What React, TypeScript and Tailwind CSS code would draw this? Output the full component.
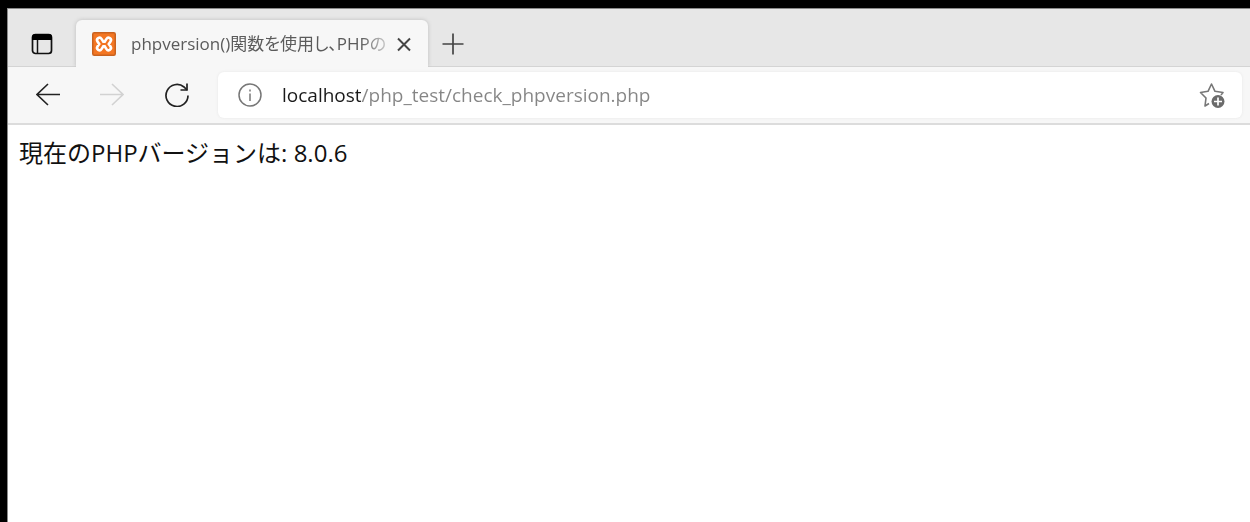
import { useState } from "react";

const XamppIcon: React.FC = () => (
  <svg className="size-6 shrink-0" viewBox="0 0 24 24" aria-hidden="true">
    <rect x="0.75" y="0.75" width="22.5" height="22.5" rx="1.5" fill="#f37623" stroke="#c9621f" strokeWidth="1.5" />
    <g fill="none" strokeLinecap="round" strokeLinejoin="round">
      <path d="M7.5 8.2l2.5 3.8-2.5 3.8M16.5 8.2L14 12l2.5 3.8M10 12h4" stroke="#fff" strokeWidth="7.4" />
      <path d="M7.5 8.2l2.5 3.8-2.5 3.8M16.5 8.2L14 12l2.5 3.8M10 12h4" stroke="#f37623" strokeWidth="2.2" />
    </g>
  </svg>
);

const TabActionsIcon: React.FC = () => (
  <svg className="size-6" viewBox="0 0 24 24" aria-hidden="true">
    <rect x="2.5" y="2.5" width="19" height="19" rx="3" fill="none" stroke="#111" strokeWidth="1.7" />
    <path d="M2 8V5a3 3 0 0 1 3-3h14a3 3 0 0 1 3 3v3z" fill="#000" />
    <path d="M7.5 8v13" stroke="#111" strokeWidth="1.5" />
  </svg>
);

const BackIcon: React.FC = () => (
  <svg className="size-6" viewBox="0 0 24 24" fill="none" stroke="currentColor" strokeWidth="1.6" aria-hidden="true">
    <path d="M24 11.5H1M12 1 1 11.5 12 22" />
  </svg>
);

const ForwardIcon: React.FC = () => (
  <svg className="size-6" viewBox="0 0 24 24" fill="none" stroke="currentColor" strokeWidth="1.6" aria-hidden="true">
    <path d="M0 11.5h23M12 1l11 10.5L12 22" />
  </svg>
);

const ReloadIcon: React.FC = () => (
  <svg className="size-6" viewBox="0 0 24 24" fill="none" stroke="currentColor" strokeWidth="1.7" aria-hidden="true">
    <path d="M23 12.5a11 11 0 1 1-4-8.500L22 7" />
    <path d="M22 0.500v6.500H15.500" />
  </svg>
);

const InfoIcon: React.FC = () => (
  <svg className="size-6" viewBox="0 0 24 24" fill="none" stroke="currentColor" strokeWidth="1.5" aria-hidden="true">
    <circle cx="12" cy="12" r="11" />
    <path d="M12 10.5v7.5M12 6.5v2" />
  </svg>
);

const FavoriteIcon: React.FC = () => (
  <svg className="size-7" viewBox="0 0 28 28" aria-hidden="true">
    <path
      d="M11 22.500L7 25l1-8-5.500-5.500 7.500-1.200L13.500 3l3.500 7.300 8 1.200-2 2.500"
      fill="none"
      stroke="#777"
      strokeWidth="1.6"
      strokeLinejoin="round"
    />
    <circle cx="20" cy="20.5" r="6.5" fill="#6b6b6b" />
    <path d="M20 16.500v8M16 20.500h8" stroke="#fff" strokeWidth="1.7" />
  </svg>
);

const TabStrip: React.FC = () => (
  <div className="flex h-[59px] items-end border-t border-[#8a8a8a] bg-[#e7e7e7] shadow-[inset_0_-1px_0_#d4d4d4]">
    <button type="button" aria-label="Tab actions" className="mx-[22px] mb-[11px]">
      <TabActionsIcon />
    </button>
    <div className="relative flex h-[47px] w-[352px] items-center justify-between rounded-t-md bg-[#f7f7f7] px-4 shadow-[0_0_4px_#bdbdbd] [clip-path:inset(-4px_-4px_0_-4px)]">
      <div className="flex items-center gap-[15px]">
        <XamppIcon />
        <span className="whitespace-nowrap text-[17px] text-[#5b5b5b] [font-feature-settings:'palt'] [mask-image:linear-gradient(to_right,black_90%,transparent_104%)]">
          phpversion()関数を使用し、PHPの
        </span>
      </div>
      <button type="button" aria-label="Close tab" className="shrink-0 text-[#454545]">
        <svg className="size-4" viewBox="0 0 16 16" stroke="currentColor" strokeWidth="2" aria-hidden="true">
          <path d="M2 2.500l12 12M14 2.500l-12 12" />
        </svg>
      </button>
    </div>
    <button type="button" aria-label="New tab" className="mb-[11px] ml-[13px] text-[#444]">
      <svg className="size-6" viewBox="0 0 24 24" stroke="currentColor" strokeWidth="1.7" aria-hidden="true">
        <path d="M12 1.5v21M1.5 12h21" />
      </svg>
    </button>
  </div>
);

const Toolbar: React.FC = () => {
  const [url, setUrl] = useState("localhost/php_test/check_phpversion.php");

  return (
    <div className="flex h-[58px] items-center border-b-2 border-[#dcdcdc] bg-[#f7f7f7] pl-7 pr-2">
      <button type="button" aria-label="Back" className="mr-10 text-[#222]">
        <BackIcon />
      </button>
      <button type="button" aria-label="Forward" disabled className="mr-[41px] text-[#d2d2d2]">
        <ForwardIcon />
      </button>
      <button type="button" aria-label="Reload" className="mr-[29px] text-[#222]">
        <ReloadIcon />
      </button>
      <div className="flex h-[46px] flex-1 items-center rounded-md bg-white pl-5 pr-4 shadow-[0_0_3px_#e6e6e6]">
        <button type="button" aria-label="Site information" className="mr-5 text-[#777]">
          <InfoIcon />
        </button>
        <input
          type="text"
          aria-label="Address"
          value={url}
          onChange={(e) => setUrl(e.target.value)}
          className="min-w-0 flex-1 bg-[linear-gradient(to_right,#1a1a1a_79px,#858585_79px)] bg-clip-text text-[19px] text-transparent outline-none"
        />
        <button type="button" aria-label="Add to favorites">
          <FavoriteIcon />
        </button>
      </div>
    </div>
  );
};

export default function App() {
  return (
    <div className="min-h-screen bg-black pl-[7px] pt-2 font-['Open_Sans','Noto_Sans_CJK_JP',sans-serif]">
      <div className="flex min-h-[calc(100vh-8px)] flex-col border-l border-[#8a8a8a] bg-white">
        <TabStrip />
        <Toolbar />
        <main className="px-[11px] py-3">
          <p className="text-[24px] leading-8 text-[#111]">現在のPHPバージョンは: 8.0.6</p>
        </main>
      </div>
    </div>
  );
}
